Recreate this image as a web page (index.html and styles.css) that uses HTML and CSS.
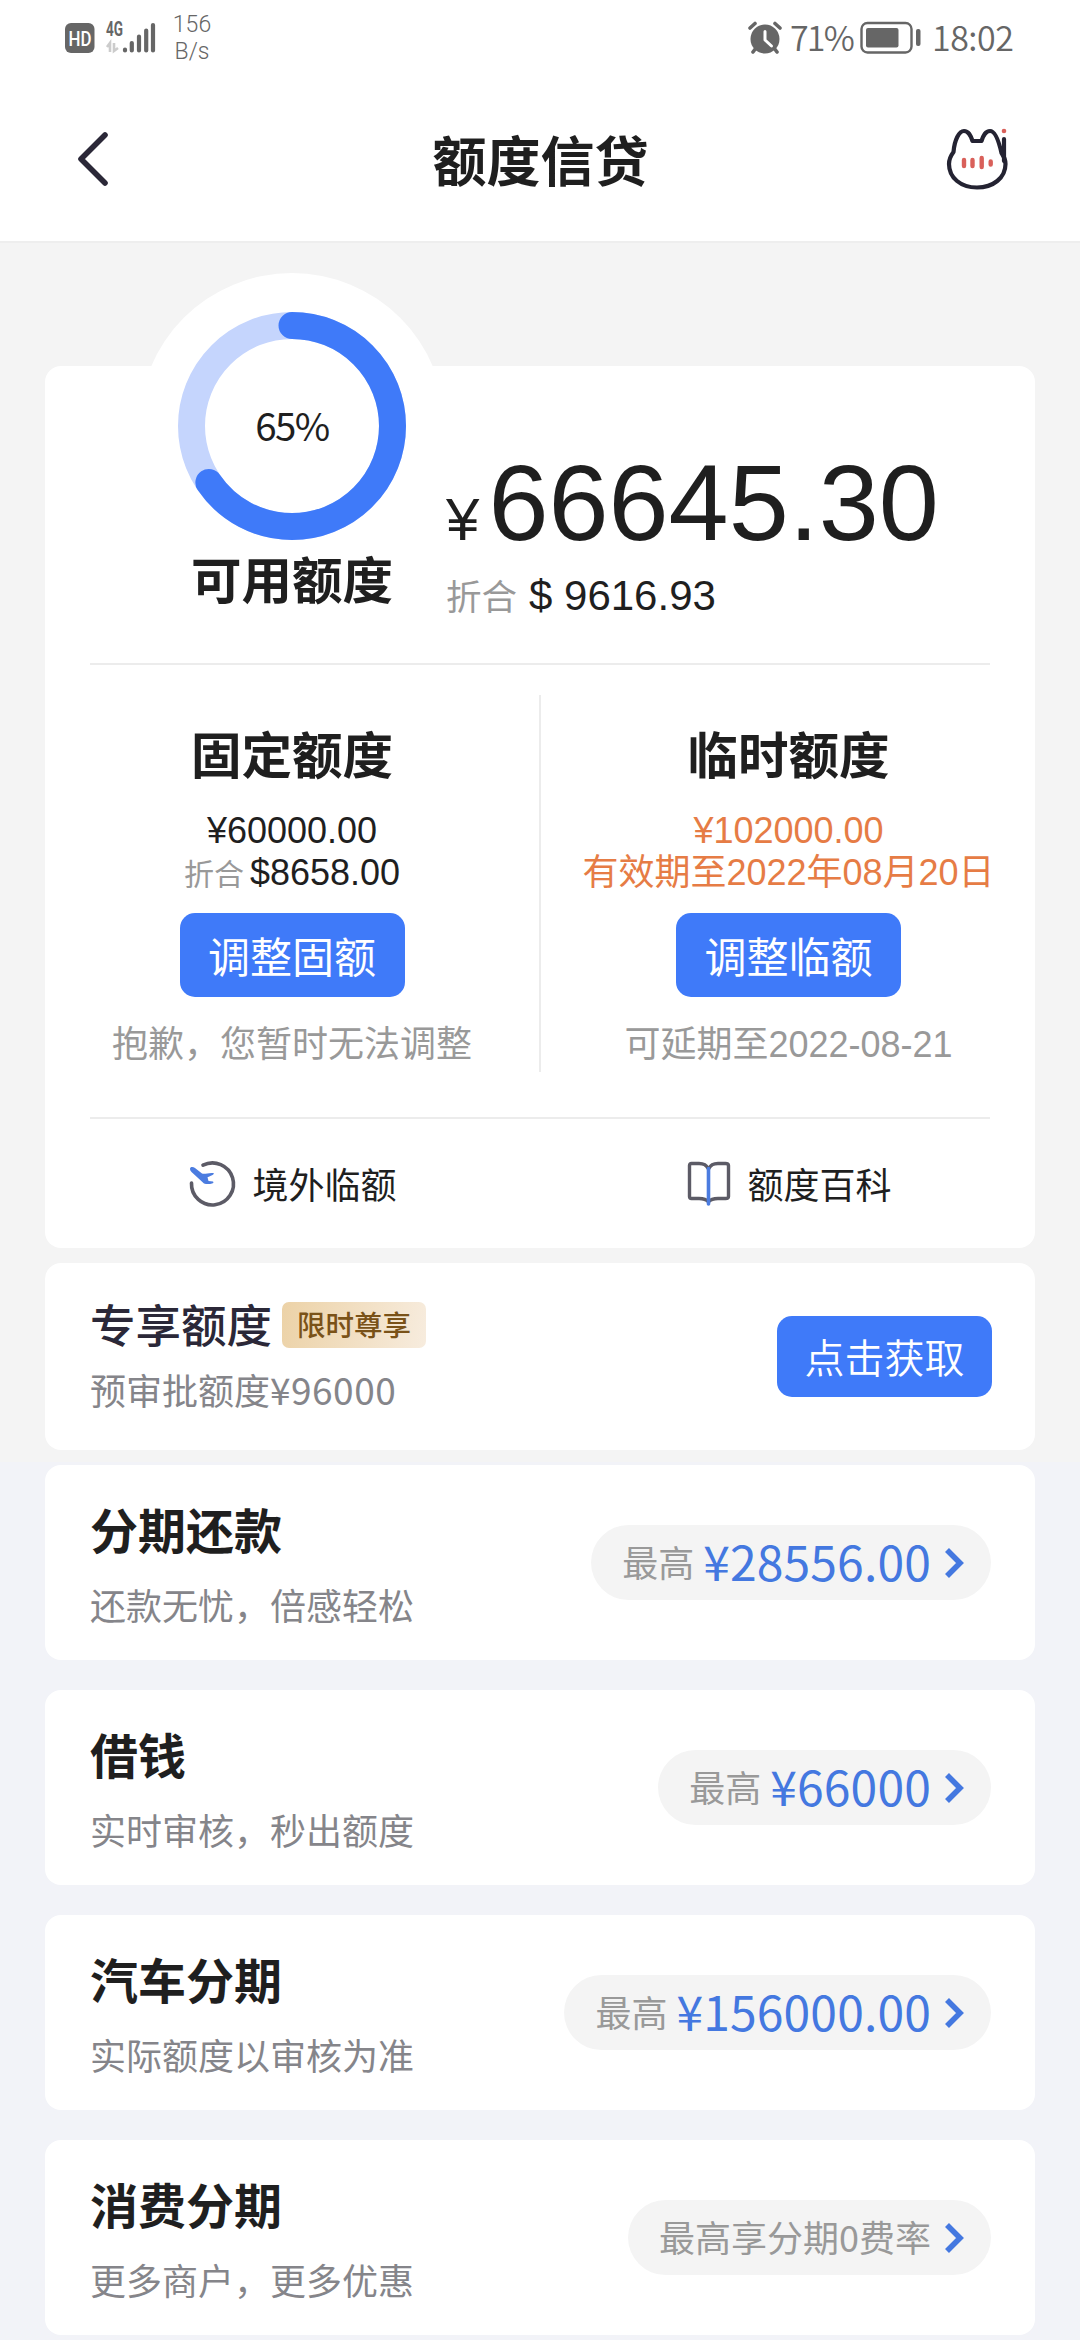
FILE: index.html
```html
<!DOCTYPE html>
<html lang="zh-CN">
<head>
<meta charset="utf-8">
<title>额度信贷</title>
<link rel="stylesheet" href="styles.css">
</head>
<body>
<header class="top">
  <div class="status">
    <svg class="status-net" width="94" height="46" viewBox="0 -6 94 46">
      <rect x="0" y="2" width="29.500" height="30" rx="6" fill="#666"/>
      <text x="3.500" y="24.500" class="hd" textLength="23" lengthAdjust="spacingAndGlyphs">HD</text>
      <text x="41" y="14.500" class="net-type" textLength="17" lengthAdjust="spacingAndGlyphs">4G</text>
      <path d="M42 26l3-4v9M49 22v8l4-3" fill="none" stroke="#ccc" stroke-width="2.600"/>
      <g stroke="#666" stroke-width="4.200" stroke-linecap="round">
        <path d="M60 28.500v1M66.800 22v7.500M74 15.500v14M81.200 9.500v20M88 4v25.500"/>
      </g>
    </svg>
    <div class="speed"><span>156</span><span>B/s</span></div>
    <svg class="alarm" width="34" height="32" viewBox="0 0 34 32">
      <circle cx="17" cy="17" r="14.500" fill="#666"/>
      <path d="M2 6l5-4.500M32 6l-5-4.500" stroke="#666" stroke-width="3.600" stroke-linecap="round"/>
      <path d="M8 26l-3 4M26 26l3 4" stroke="#666" stroke-width="3.600" stroke-linecap="round"/>
      <path d="M17 9.500v8.500l6.500 6" fill="none" stroke="#fff" stroke-width="3" stroke-linecap="round" stroke-linejoin="round"/>
    </svg>
    <span class="pct">71%</span>
    <svg class="battery" width="62" height="34" viewBox="0 0 62 34">
      <rect x="1.500" y="2" width="50" height="29.500" rx="6" fill="none" stroke="#666" stroke-width="2.400"/>
      <rect x="6" y="7" width="32.500" height="19.500" rx="2" fill="#666"/>
      <rect x="56" y="8" width="4.500" height="17" rx="2" fill="#666"/>
    </svg>
    <span class="clock">18:02</span>
  </div>
  <nav class="nav">
    <svg width="36" height="60" viewBox="0 0 36 60"><path d="M30 6L6 30l24 24" fill="none" stroke="#2b2838" stroke-width="5.600" stroke-linecap="round" stroke-linejoin="round"/></svg>
    <h1>额度信贷</h1>
    <svg width="64" height="66" viewBox="0 0 64 66">
      <path d="M59 13v22" stroke="#242332" stroke-width="4.200" stroke-linecap="round"/>
      <circle cx="59" cy="5" r="2.300" fill="#d9605a"/>
      <path d="M8.500 26C9.500 14 14 5 19 5c4.500 0 6.500 4 8.500 10h9C38.500 9 40.500 5 45 5c5.500 0 9 11 11.500 22 3 4 4 7 4 11C60.500 52 48 61.500 32 61.500S4 52 4 38c0-5 1.500-8 4.500-12z" fill="none" stroke="#242332" stroke-width="4.200" stroke-linejoin="round"/>
      <g stroke="#d9605a" stroke-width="4.400" stroke-linecap="round"><path d="M19 34v6M27.500 34v6M36.700 32v9M45.700 35.500v3"/></g>
    </svg>
  </nav>
</header>

<main class="page">
  <section class="card summary">
    <div class="hero">
      <div class="gauge">
        <div class="ring">
          <svg width="228" height="228" viewBox="0 0 228 228">
            <g fill="none" stroke-width="27" transform="rotate(-90 114 114)">
              <circle cx="114" cy="114" r="100.500" stroke="#c5d5fd"/>
              <circle cx="114" cy="114" r="100.500" stroke="#3f7af9" stroke-linecap="round" pathLength="100" stroke-dasharray="65.500 100"/>
            </g>
          </svg>
          <span class="ring-value">65%</span>
        </div>
        <h2>可用额度</h2>
      </div>
      <div class="total">
        <div class="total-cny"><span class="yen">¥</span>66645.30</div>
        <div class="total-usd"><span class="conv">折合</span>$ 9616.93</div>
      </div>
    </div>
    <div class="split">
      <div class="limit">
        <h2>固定额度</h2>
        <div class="line">¥60000.00</div>
        <div class="line usd"><span class="conv">折合</span>$8658.00</div>
        <button class="btn">调整固额</button>
        <p>抱歉，您暂时无法调整</p>
      </div>
      <div class="limit">
        <h2>临时额度</h2>
        <div class="line warn">¥102000.00</div>
        <div class="line warn">有效期至2022年08月20日</div>
        <button class="btn">调整临额</button>
        <p>可延期至2022-08-21</p>
      </div>
    </div>
    <div class="links">
      <a class="link">
        <svg width="50" height="50" viewBox="0 0 50 50">
          <path d="M16 6.200A21 21 0 1 1 4.500 24" fill="none" stroke="#5c5b66" stroke-width="3.600" stroke-linecap="round"/>
          <path d="M3 10C3 7.500 6 7.500 8 9l7 5.500c3 1 6-1 11.500-.500 1 1-.500 2-6 4.300l1 3.700 4.500.500c1 1 0 2-1 2-3 1-6 .500-8 0L4.500 13C3.500 12 3 11 3 10z" fill="#4b7ce0"/>
        </svg>
        <span>境外临额</span>
      </a>
      <a class="link book">
        <svg width="46" height="50" viewBox="0 0 46 50">
          <path d="M22.500 10C20 5 17 4.500 13 4.500H5.500Q3.500 4.500 3.500 6.500V37.500Q3.500 39.500 5.500 39.500H13C18 39.500 20.500 40.500 22.500 43 24.500 40.500 27 39.500 32 39.500H39.500Q42.500 39.500 42.500 37.500V6.500Q42.500 4.500 39.500 4.500H32C28 4.500 25 5 22.500 10z" fill="none" stroke="#5c5b66" stroke-width="3.400" stroke-linejoin="round"/>
          <path d="M22.500 9.500V45" stroke="#4b7ce0" stroke-width="3.600" stroke-linecap="round"/>
        </svg>
        <span>额度百科</span>
      </a>
    </div>
  </section>

  <section class="card exclusive">
    <div>
      <div class="exclusive-head"><h3>专享额度</h3><span class="tag">限时尊享</span></div>
      <p>预审批额度<span class="figure">¥96000</span></p>
    </div>
    <button class="btn btn-get">点击获取</button>
  </section>

  <section class="products">
    <article class="card product">
      <div><h3>分期还款</h3><p>还款无忧，倍感轻松</p></div>
      <a class="pill"><span>最高</span><b>¥28556.00</b><svg width="20" height="32" viewBox="0 0 20 32"><path d="M3 3l13 13L3 29" fill="none" stroke="#4478e0" stroke-width="5.600"/></svg></a>
    </article>
    <article class="card product">
      <div><h3>借钱</h3><p>实时审核，秒出额度</p></div>
      <a class="pill"><span>最高</span><b>¥66000</b><svg width="20" height="32" viewBox="0 0 20 32"><path d="M3 3l13 13L3 29" fill="none" stroke="#4478e0" stroke-width="5.600"/></svg></a>
    </article>
    <article class="card product">
      <div><h3>汽车分期</h3><p>实际额度以审核为准</p></div>
      <a class="pill"><span>最高</span><b>¥156000.00</b><svg width="20" height="32" viewBox="0 0 20 32"><path d="M3 3l13 13L3 29" fill="none" stroke="#4478e0" stroke-width="5.600"/></svg></a>
    </article>
    <article class="card product">
      <div><h3>消费分期</h3><p>更多商户，更多优惠</p></div>
      <a class="pill"><span>最高享分期0费率</span><svg width="20" height="32" viewBox="0 0 20 32"><path d="M3 3l13 13L3 29" fill="none" stroke="#4478e0" stroke-width="5.600"/></svg></a>
    </article>
  </section>
</main>
</body>
</html>
```
FILE: styles.css
```css
* { box-sizing: border-box; margin: 0; padding: 0; }
body {
  width: 1080px;
  height: 2340px;
  overflow: hidden;
  font-family: "Noto Sans CJK SC", sans-serif;
  color: #1f1f1f;
  background: linear-gradient(#f4f4f4 1462px, #f2f3f8 1462px);
}
svg { display: block; flex: none; overflow: visible; }
h1, h2 { font-weight: 700; }

.top { height: 243px; background: #fff; border-bottom: 2px solid #eee; }
.status { display: flex; height: 76px; padding: 0 62px 0 65px; align-items: center; color: #666; }
.hd { font: 500 21px "Roboto", sans-serif; fill: #fff; }
.net-type { font: 700 20px "Roboto", sans-serif; fill: #666; }
.speed { display: flex; flex-direction: column; align-items: center; width: 40px; margin: 0 0 0 13px; font: 350 23px/27px "Roboto", sans-serif; }
.alarm { margin-left: auto; }
.pct, .clock { font-size: 34px; line-height: 48px; margin-top: -2px; font-weight: 350; letter-spacing: -.500px; }
.pct { width: 68px; margin-left: 8px; letter-spacing: -1.800px; }
.battery { margin-left: 2px; }
.clock { width: 86px; margin-left: 10px; white-space: nowrap; }
.nav { display: flex; align-items: center; justify-content: space-between; height: 165px; padding: 0 71px 0 75px; }
.nav h1 { font-size: 54px; line-height: 80px; padding-left: 25px; }

.page { padding: 123px 45px 0; }
.card { background: #fff; border-radius: 16px; }

.summary { height: 882px; }
.hero { display: flex; height: 299px; margin: 0 45px; border-bottom: 2px solid #ececec; }
.gauge { width: 228px; margin: -54px 40px 0 88px; text-align: center; flex: none; }
.ring { position: relative; width: 228px; height: 228px; }
.ring::before {
  content: "";
  position: absolute;
  left: -39px;
  top: -39px;
  width: 306px;
  height: 306px;
  border-radius: 50%;
  background: #fff;
}
.ring svg { position: relative; }
.ring-value { position: absolute; inset: 0; font-size: 38.500px; line-height: 225px; letter-spacing: -1.600px; }
.gauge h2, .limit h2 { position: relative; font-size: 50.500px; line-height: 60px; white-space: nowrap; }
.gauge h2 { margin-top: 7px; }
.total { padding-top: 83px; font-family: "Liberation Sans", "Noto Sans CJK SC", sans-serif; white-space: nowrap; }
.total-cny { font-size: 108px; line-height: 108px; }
.yen { font-size: 60px; line-height: 0; margin-right: 9px; }
.total-usd { margin-top: 18px; font-size: 42px; line-height: 42px; }
.conv { font-family: "Noto Sans CJK SC", sans-serif; line-height: 0; color: #999; font-size: 35.500px; margin-right: 12px; }

.split { display: flex; height: 454px; padding-top: 30px; margin: 0 45px; border-bottom: 2px solid #ececec; }
.limit { width: 449px; height: 377px; display: flex; flex-direction: column; align-items: center; white-space: nowrap; flex: none; font-family: "Liberation Sans", "Noto Sans CJK SC", sans-serif; }
.limit:first-child { width: 451px; padding-right: 45px; border-right: 2px solid #ececec; }
.limit:last-child { padding-left: 46px; }
.limit h2 { margin-top: 32px; }
.line { height: 42px; line-height: 42px; font-size: 36px; margin-top: 23px; }
.line + .line { margin-top: 0; }
.usd .conv { font-size: 30px; margin-right: 6px; }
.warn { color: #e67c45; }
.btn { width: 225px; height: 84px; margin-top: 19px; flex: none; border: 0; border-radius: 15px; background: #3f7af9; color: #fff; font: 400 42px/82px "Noto Sans CJK SC", sans-serif; }
.limit p { margin-top: 21px; font-size: 36px; line-height: 54px; color: #999; }
.links { display: flex; height: 129px; }
.link { flex: 1; display: flex; align-items: center; justify-content: center; gap: 15px; padding-left: 1px; font-size: 36px; line-height: 54px; }
.link span { margin-top: -1px; }
.book { padding-left: 5px; }

.exclusive { display: flex; justify-content: space-between; height: 187px; margin-top: 15px; padding: 31px 43px 0 45px; }
.exclusive-head { display: flex; align-items: center; gap: 10px; height: 60px; }
.exclusive h3 { font-size: 45.500px; line-height: 60px; margin-top: -2px; font-weight: 500; color: #2b2838; }
.tag { width: 144px; height: 46px; margin-top: 2px; border-radius: 7px; text-align: center; font-size: 28.500px; line-height: 44px; font-weight: 500; color: #7a5218; background: linear-gradient(100deg, #ecd2a7, #f7ecde); }
.exclusive p, .product p { font-size: 36px; line-height: 54px; color: #85858a; }
.exclusive p { margin-top: 8px; }
.figure { font-size: 37px; line-height: 0; letter-spacing: .500px; }
.btn-get { width: 215px; height: 81px; margin-top: 22px; font-size: 40px; line-height: 78px; font-weight: 350; padding-bottom: 2px; }

.products { display: flex; flex-direction: column; gap: 30px; margin-top: 15px; }
.product { display: flex; align-items: center; justify-content: space-between; height: 195px; padding: 0 44px 0 45px; }
.product h3 { font-size: 48px; line-height: 70px; font-weight: 700; margin-top: -2px; }
.product p { margin-top: 14px; }
.pill { display: flex; align-items: center; height: 75px; padding: 0 27px 0 31px; border-radius: 38px; background: #f4f4f4; }
.pill span { font-size: 36px; line-height: 71px; margin-top: -2px; color: #999; }
.pill b { margin: -5px 0 0 9px; font-size: 48px; line-height: 70px; letter-spacing: .150px; font-weight: 400; color: #4478e0; }
.pill svg { margin-left: 13px; }
```
